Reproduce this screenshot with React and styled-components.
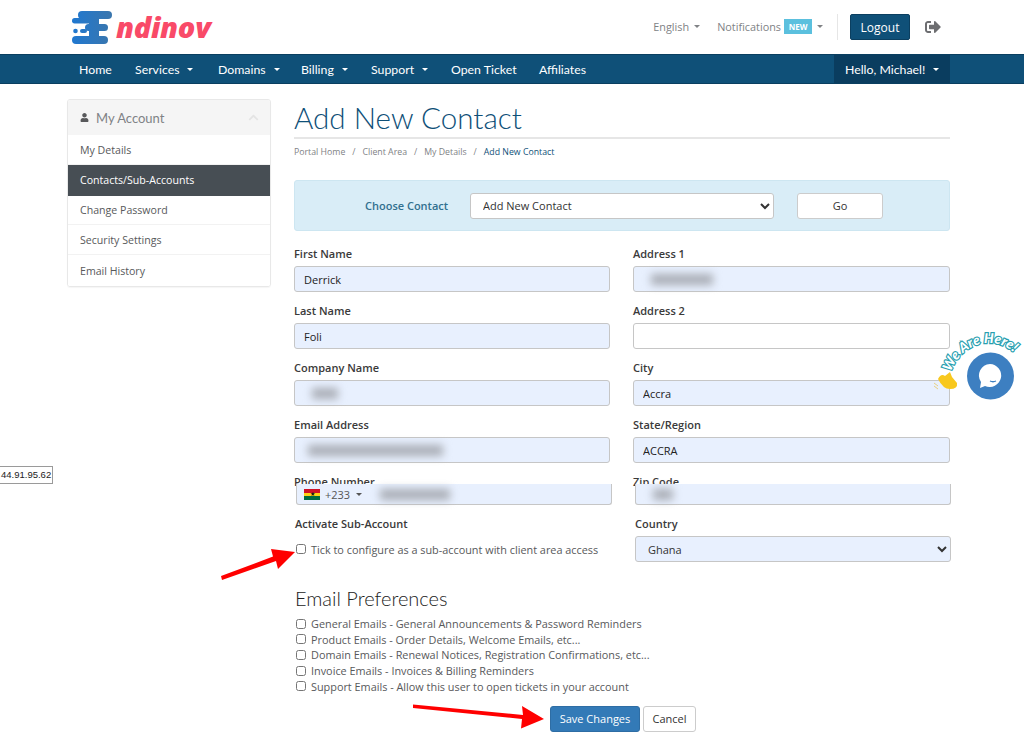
import React from 'react'
import styled, { createGlobalStyle } from 'styled-components'
import { FaUser, FaChevronUp, FaSignOutAlt } from 'react-icons/fa'

const Global = createGlobalStyle`
  html, body { margin: 0; padding: 0; background: #fff; }
  body { font-family: "Open Sans", "Liberation Sans", sans-serif; color: #333; }
  * { box-sizing: border-box; }
`

const Page = styled.div`
  position: relative;
  width: 1024px;
  height: 737px;
  overflow: hidden;
`

const Header = styled.header`
  height: 54px;
  padding: 0 83px 0 71px;
  display: flex;
  align-items: center;
  justify-content: space-between;
`

const Logo = styled.div`
  display: flex;
  align-items: center;
  gap: 3px;
  margin-top: -1px;
`

const LogoText = styled.span`
  font-family: "Open Sans", sans-serif;
  font-weight: 800;
  font-style: italic;
  font-size: 29px;
  letter-spacing: -0.3px;
  color: #f94a68;
  line-height: 1;
`

const TopRight = styled.div`
  display: flex;
  align-items: center;
`

const TopLink = styled.span`
  display: flex;
  align-items: center;
  font-size: 10.85px;
  color: #808285;
  margin-right: ${p => p.$mr || 0}px;
  margin-top: -1px;
`

const Caret = styled.i`
  display: inline-block;
  width: 0;
  height: 0;
  margin-left: ${p => p.$ml || 5}px;
  border-left: 3px solid transparent;
  border-right: 3px solid transparent;
  border-top: 3px solid ${p => p.$color || '#808285'};
`

const NewBadge = styled.b`
  margin-left: 3px;
  width: 28px;
  height: 15px;
  background: #5bc0de;
  color: #fff;
  font-size: 8px;
  font-weight: 700;
  text-align: center;
  line-height: 15px;
`

const Divider = styled.div`
  width: 1px;
  height: 26px;
  background: #e6e6e6;
  margin: 0 12px 0 14px;
`

const LogoutButton = styled.button`
  width: 60px;
  height: 26px;
  padding: 0;
  background: #0f5078;
  border: 1px solid #0b3f60;
  border-radius: 2px;
  color: #fff;
  font: 12px "Open Sans", sans-serif;
`

const LogoutIcon = styled(FaSignOutAlt)`
  margin-left: 15px;
  font-size: 16px;
  color: #6d6e71;
`

const Nav = styled.nav`
  height: 30px;
  padding: 0 74px 0 67px;
  background: #0f5078;
  border-top: 1px solid #0a3f60;
  border-bottom: 1px solid #0a3f60;
  display: flex;
  justify-content: space-between;
`

const NavList = styled.div`
  display: flex;
  align-items: center;
  padding-left: 12px;
`

const NavItem = styled.span`
  display: flex;
  align-items: center;
  font-family: "Lato", sans-serif;
  font-size: 12.3px;
  color: #fff;
  width: ${p => p.$w}px;
`

const HelloBox = styled.div`
  width: 116px;
  padding-left: 11px;
  background: #0a3d5f;
  display: flex;
  align-items: center;
  font-family: "Lato", sans-serif;
  font-size: 12.3px;
  color: #fff;
`

const Content = styled.div`
  padding: 15px 74px 0 67px;
  display: flex;
  align-items: flex-start;
  gap: 23px;
`

const Sidebar = styled.aside`
  width: 204px;
  flex: none;
  border: 1px solid #e8e8e8;
  border-radius: 3px;
  box-shadow: 0 1px 1px rgba(0, 0, 0, 0.04);
  overflow: hidden;
`

const SideHead = styled.div`
  height: 35px;
  background: #f5f5f5;
  padding: 0 11px 0 12px;
  display: flex;
  align-items: center;
  color: #808285;
  font-family: "Lato", sans-serif;
  font-size: 13px;
  svg:first-child { font-size: 9px; color: #58595b; margin-right: 7px; }
  svg:last-child { margin-left: auto; font-size: 11px; color: #e4e4e4; margin-right: 0; }
`

const SideItem = styled.div`
  position: relative;
  height: 30px;
  padding: 0 12px;
  display: flex;
  align-items: center;
  font-size: 10.6px;
  color: ${p => (p.$active ? '#fff' : '#58595b')};
  background: ${p => (p.$active ? '#474e54' : '#fff')};
  border-bottom: 1px solid ${p => (p.$active ? '#474e54' : '#f2f2f2')};
  ${p => p.$active && 'box-shadow: 0 1px 0 #474e54; z-index: 1;'}
  &:last-child { border-bottom: 0; height: 31px; padding-top: 1px; }
`

const Main = styled.main`
  width: 656px;
`

const Title = styled.h1`
  margin: 0;
  height: 40px;
  border-bottom: 2px solid #e6e6e6;
  font-family: "Lato", sans-serif;
  font-weight: 300;
  font-size: 29.6px;
  line-height: 38px;
  color: #0f5078;
`

const Crumbs = styled.div`
  margin-top: 7px;
  height: 12px;
  display: flex;
  gap: 7px;
  font-size: 8.75px;
  line-height: 12px;
  color: #808285;
  b { font-weight: 400; color: #0f5078; }
`

const ChooseBox = styled.div`
  margin-top: 22px;
  height: 51px;
  background: #d9edf7;
  border: 1px solid #cde6f1;
  border-radius: 3px;
  display: flex;
  align-items: center;
  padding-left: 70px;
`

const ChooseLabel = styled.span`
  width: 105px;
  margin-top: -1px;
  font-size: 11px;
  font-weight: 600;
  color: #31708f;
`

const Select = styled.select`
  display: block;
  width: ${p => p.$w || 304}px;
  height: 26px;
  margin-left: ${p => p.$ml || 0}px;
  padding: 0 8px;
  font: 11px "Open Sans", sans-serif;
  color: #333;
  border: 1px solid #c6c6c6;
  border-radius: 3px;
  background-color: ${p => (p.$fill ? '#e8f0fe' : '#fff')};
`

const GoButton = styled.button`
  width: 86px;
  height: 26px;
  margin-left: 23px;
  padding: 0;
  background: #fff;
  border: 1px solid #ccc;
  border-radius: 3px;
  color: #333;
  font: 11px "Open Sans", sans-serif;
`

const FormGrid = styled.div`
  margin-top: 15px;
  display: grid;
  grid-template-columns: 316px 317px;
  column-gap: 23px;
  row-gap: 11px;
`

const Field = styled.div`
  min-width: 0;
`

const Label = styled.label`
  display: block;
  height: 16px;
  margin-bottom: 4px;
  font-size: 11px;
  font-weight: 600;
  line-height: 15px;
  color: #3a3a3a;
  padding-left: ${p => p.$indent || 0}px;
`

const TextInput = styled.input`
  display: block;
  width: 100%;
  height: 26px;
  padding: 0 9px;
  font: 11px "Open Sans", sans-serif;
  color: #222;
  background: ${p => (p.$empty ? '#fff' : '#e8f0fe')};
  border: 1px solid #c6c6c6;
  border-radius: 3px;
`

const BlurInput = styled.div`
  height: 26px;
  padding: 0 9px;
  display: flex;
  align-items: center;
  background: #e8f0fe;
  border: 1px solid #c6c6c6;
  border-radius: 3px;
`

const Blur = styled.span`
  display: block;
  margin-left: ${p => p.$ml || 0}px;
  width: ${p => p.$w}px;
  height: 11px;
  background: #a9adb5;
  filter: blur(4px);
`

/* the phone and zip rows are spliced in the shot, they cut their labels off */
const SplicedInput = styled.div`
  position: relative;
  width: 316px;
  height: 21px;
  margin: -10px 0 0 2px;
  padding-left: 7px;
  display: flex;
  align-items: center;
  background: #e8f0fe;
  border: 1px solid #c6c6c6;
  border-top: 0;
  border-radius: 0 0 3px 3px;
  font-size: 11px;
  color: #555;
`

const Flag = styled.span`
  width: 16px;
  height: 11px;
  margin-right: 5px;
  display: flex;
  flex-direction: column;
  align-items: center;
  position: relative;
  background: linear-gradient(#ce1126 33%, #fcd116 33% 66%, #006b3f 66%);
  &::after {
    content: '★';
    position: absolute;
    top: 2px;
    font-size: 6px;
    line-height: 7px;
    color: #111;
  }
`

const SubRow = styled.div`
  margin-top: 3px;
`

const CheckLine = styled.label`
  display: flex;
  align-items: center;
  height: ${p => p.$h || 15.6}px;
  font-size: 10.86px;
  color: #58595b;
`

const Box = styled.input.attrs({ type: 'checkbox' })`
  width: 10px;
  height: 10px;
  margin: 0 5px 0 2px;
`

const SubHead = styled.h3`
  margin: 23px 0 5px 1px;
  height: 26px;
  font-family: "Lato", sans-serif;
  font-weight: 300;
  font-size: 20px;
  line-height: 26px;
  color: #222;
`

const Actions = styled.div`
  margin-top: 12px;
  display: flex;
  gap: 3px;
  padding-left: 256px;
`

const ActionButton = styled.button`
  height: 26px;
  width: ${p => p.$w}px;
  padding: 0;
  border-radius: 3px;
  font: 11px "Open Sans", sans-serif;
  color: ${p => (p.$primary ? '#fff' : '#333')};
  background: ${p => (p.$primary ? '#337ab7' : '#fff')};
  border: 1px solid ${p => (p.$primary ? '#2e6da4' : '#ccc')};
`

const IpTag = styled.div`
  position: absolute;
  left: -1px;
  top: 466px;
  width: 54px;
  height: 18px;
  padding-left: 1px;
  background: #fff;
  border: 1px solid #9a9a9a;
  font: 9.5px/16px "Liberation Sans", sans-serif;
  color: #222;
`

const Overlay = styled.svg`
  position: absolute;
  left: 0;
  top: 0;
  pointer-events: none;
`

const ChatText = styled.text`
  font-family: "Lato", sans-serif;
  font-style: italic;
  font-weight: 900;
  font-size: 13.5px;
  letter-spacing: 0.2px;
  fill: #fff;
  stroke: #2a9fb0;
  stroke-width: 2.4px;
  paint-order: stroke;
`

function LogoMark() {
  return (
    <svg width="42" height="34" viewBox="0 0 42 34">
      <defs>
        <linearGradient id="lg" gradientUnits="userSpaceOnUse" x1="0" y1="0" x2="42" y2="0">
          <stop offset="0" stopColor="#1f78d1" />
          <stop offset="1" stopColor="#3b76ac" />
        </linearGradient>
      </defs>
      <g fill="url(#lg)">
        <rect x="7" y="1" width="34" height="8" rx="4" />
        <rect x="1" y="8" width="20" height="5.500" rx="2.700" />
        <rect x="18" y="5" width="10" height="25" />
        <rect x="14" y="14" width="23" height="7" rx="3.500" />
        <rect x="1" y="26" width="36" height="8" rx="4" />
        <circle cx="4.500" cy="21" r="2.300" />
        <rect x="9" y="19" width="7" height="4" rx="2" />
      </g>
    </svg>
  )
}

const contactsMenu = ['My Details', 'Contacts/Sub-Accounts', 'Change Password', 'Security Settings', 'Email History']

const emailPrefs = [
  'General Emails - General Announcements & Password Reminders',
  'Product Emails - Order Details, Welcome Emails, etc...',
  'Domain Emails - Renewal Notices, Registration Confirmations, etc...',
  'Invoice Emails - Invoices & Billing Reminders',
  'Support Emails - Allow this user to open tickets in your account',
]

export default function App() {
  return (
    <Page>
      <Global />
      <Header>
        <Logo>
          <LogoMark />
          <LogoText>ndinov</LogoText>
        </Logo>
        <TopRight>
          <TopLink $mr={17}>English<Caret /></TopLink>
          <TopLink>Notifications<NewBadge>NEW</NewBadge><Caret /></TopLink>
          <Divider />
          <LogoutButton>Logout</LogoutButton>
          <LogoutIcon />
        </TopRight>
      </Header>

      <Nav>
        <NavList>
          <NavItem $w={56}>Home</NavItem>
          <NavItem $w={83}>Services<Caret $ml={8} $color="#fff" /></NavItem>
          <NavItem $w={83}>Domains<Caret $ml={8} $color="#fff" /></NavItem>
          <NavItem $w={70}>Billing<Caret $ml={8} $color="#fff" /></NavItem>
          <NavItem $w={80}>Support<Caret $ml={8} $color="#fff" /></NavItem>
          <NavItem $w={88}>Open Ticket</NavItem>
          <NavItem $w={60}>Affiliates</NavItem>
        </NavList>
        <HelloBox>Hello, Michael!<Caret $ml={8} $color="#fff" /></HelloBox>
      </Nav>

      <Content>
        <Sidebar>
          <SideHead><FaUser />My Account<FaChevronUp /></SideHead>
          {contactsMenu.map((m, i) => (
            <SideItem key={m} $active={i === 1}>{m}</SideItem>
          ))}
        </Sidebar>

        <Main>
          <Title>Add New Contact</Title>
          <Crumbs>
            <span>Portal Home</span><span>/</span>
            <span>Client Area</span><span>/</span>
            <span>My Details</span><span>/</span>
            <b>Add New Contact</b>
          </Crumbs>

          <ChooseBox>
            <ChooseLabel>Choose Contact</ChooseLabel>
            <Select defaultValue="new"><option value="new">Add New Contact</option></Select>
            <GoButton>Go</GoButton>
          </ChooseBox>

          <FormGrid>
            <Field><Label>First Name</Label><TextInput readOnly value="Derrick" /></Field>
            <Field><Label>Address 1</Label><BlurInput><Blur $w={62} $ml={8} /></BlurInput></Field>
            <Field><Label>Last Name</Label><TextInput readOnly value="Foli" /></Field>
            <Field><Label>Address 2</Label><TextInput readOnly $empty value="" /></Field>
            <Field><Label>Company Name</Label><BlurInput><Blur $w={26} $ml={8} /></BlurInput></Field>
            <Field><Label>City</Label><TextInput readOnly value="Accra" /></Field>
            <Field><Label>Email Address</Label><BlurInput><Blur $w={135} $ml={4} /></BlurInput></Field>
            <Field><Label>State/Region</Label><TextInput readOnly value="ACCRA" /></Field>
            <Field>
              <Label>Phone Number</Label>
              <SplicedInput>
                <Flag />+233<Caret $ml={6} $color="#555" />
                <Blur $w={70} $ml={18} />
              </SplicedInput>
            </Field>
            <Field>
              <Label>Zip Code</Label>
              <SplicedInput><Blur $w={20} $ml={10} /></SplicedInput>
            </Field>
            <Field>
              <Label $indent={1}>Activate Sub-Account</Label>
              <SubRow>
                <CheckLine $h={26}><Box />Tick to configure as a sub-account with client area access</CheckLine>
              </SubRow>
            </Field>
            <Field>
              <Label $indent={2}>Country</Label>
              <Select $w={316} $ml={2} $fill defaultValue="gh"><option value="gh">Ghana</option></Select>
            </Field>
          </FormGrid>

          <SubHead>Email Preferences</SubHead>
          {emailPrefs.map(p => (
            <CheckLine key={p}><Box />{p}</CheckLine>
          ))}

          <Actions>
            <ActionButton $primary $w={90}>Save Changes</ActionButton>
            <ActionButton $w={53}>Cancel</ActionButton>
          </Actions>
        </Main>
      </Content>

      <IpTag>44.91.95.62</IpTag>

      <Overlay width="1024" height="737" viewBox="0 0 1024 737">
        {/* red annotation arrows */}
        <path fill="#f00" d="M221 576 L273 556.500 L271 549 L295 552 L278 569 L276 561 L222 580z" />
        <path fill="#f00" d="M413 704.500 L523 715 L522 706 L544 719 L521 728.500 L522 719 L413 708z" />
        {/* chat widget */}
        <circle cx="990.500" cy="376" r="23.500" fill="#3d7fc1" />
        <path fill="#fff" d="M990 364a11.500 11.500 0 1 1-5 22l-5 2 1-6a11.500 11.500 0 0 1 9-18z" />
        <path fill="none" stroke="#3d7fc1" strokeWidth="1.300" d="M990 381q3 1.500 6 0" />
        <path id="chatArc" fill="none" d="M951 372 C959 346 995 328 1021 360" />
        <ChatText><textPath href="#chatArc">We Are Here!</textPath></ChatText>
        <path fill="#f8c81e" d="M938 379Q941 373 945 376L950 372 952 377 957 383Q958 389 950 389 943 389 938 379z" />
        <path fill="none" stroke="#e7c24a" strokeWidth=".7" d="M934 383l4 3M934 386l4 3" />
      </Overlay>
    </Page>
  )
}
